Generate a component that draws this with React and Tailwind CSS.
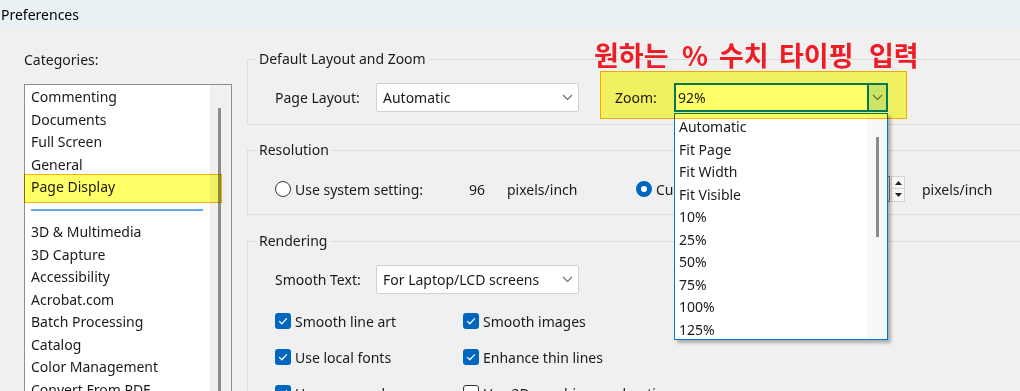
import React from "react";

const Chevron = () => (
  <svg width="11" height="7" viewBox="0 0 11 7">
    <path d="M1 1l4.5 4.5L10 1" fill="none" stroke="#6b6b6b" strokeWidth="1.1" />
  </svg>
);

const Check = ({ on }) =>
  on ? (
    <span className="w-[16px] h-[16px] rounded-[3px] bg-[#0067c0] flex items-center justify-center shrink-0">
      <svg width="10" height="8" viewBox="0 0 10 8">
        <path d="M1.2 4.1l2.6 2.6L8.8 1.4" fill="none" stroke="#ffffff" strokeWidth="1.3" />
      </svg>
    </span>
  ) : (
    <span className="w-[16px] h-[16px] rounded-[3px] border border-[#333333] bg-white shrink-0" />
  );

function Select({ text }) {
  return (
    <div className="w-[203px] h-[29px] bg-white border border-[#d0d0d0] rounded-[2px] flex items-center justify-between pl-[6px] pr-[5px]">
      <span className="whitespace-nowrap">{text}</span>
      <Chevron />
    </div>
  );
}

const cats1 = ["Commenting", "Documents", "Full Screen", "General"];
const cats2 = [
  "3D & Multimedia",
  "3D Capture",
  "Accessibility",
  "Acrobat.com",
  "Batch Processing",
  "Catalog",
  "Color Management",
  "Convert From PDF",
  "Convert To PDF",
];
const zoomItems = [
  "Automatic",
  "Fit Page",
  "Fit Width",
  "Fit Visible",
  "10%",
  "25%",
  "50%",
  "75%",
  "100%",
  "125%",
];

function Group({ title, className, children }) {
  return (
    <fieldset className={"border border-[#dcdcdc] " + className}>
      <legend className="ml-[8px] px-[3px] leading-[20px]">{title}</legend>
      {children}
    </fieldset>
  );
}

export default function App() {
  return (
    <div className="w-[1020px] h-[391px] overflow-hidden bg-[#f0f0f0] text-[14px] text-[#1a1a1a] font-['Noto_Sans',sans-serif]">
      <div className="h-[28px] bg-[#e9f1f5] pl-[1px] flex items-center text-[14px] text-black">
        Preferences
      </div>
      <div className="flex h-[363px] overflow-hidden">
        {/* Left column */}
        <div className="ml-[24px] w-[208px] shrink-0 flex flex-col">
          <div className="pt-[22px] leading-[20px]">Categories:</div>
          <div className="mt-[14px] h-[400px] border border-[#8a8d93] flex shrink-0">
            <div className="w-[185px] bg-white pt-[1px]">
              {cats1.map((c) => (
                <div key={c} className="leading-[22.5px] pl-[6px] whitespace-nowrap">
                  {c}
                </div>
              ))}
              <div className="relative leading-[22.5px] pl-[6px] whitespace-nowrap">
                Page Display
                <span className="absolute left-[-1px] right-[-12px] top-[-2px] bottom-[-4px] bg-[#ffff00]/60 border-[1.5px] border-[#ffb400] mix-blend-multiply z-10" />
              </div>
              <div className="h-[22.5px] flex items-center pl-[6px]">
                <div className="w-[172px] h-[2px] bg-[#64a8e8]" />
              </div>
              {cats2.map((c) => (
                <div key={c} className="leading-[22.5px] pl-[6px] whitespace-nowrap">
                  {c}
                </div>
              ))}
            </div>
            <div className="w-[21px] bg-[#f0f0f0]">
              <div className="ml-[8px] mt-[23px] w-[3px] h-[400px] bg-[#8c8c8c]" />
            </div>
          </div>
        </div>

        {/* Right column */}
        <div className="ml-[15px] w-[800px] shrink-0 flex flex-col">
          <Group title="Default Layout and Zoom" className="mt-[21px]">
            <div className="flex items-center pl-[27px] pt-[14px] pb-[12px]">
              <span className="w-[101px]">Page Layout:</span>
              <Select text="Automatic" />
              <div className="relative ml-[36px] flex items-center">
                <span className="w-[59px]">Zoom:</span>
                <div className="relative w-[214px] h-[29px]">
                  <div className="w-[214px] h-[29px] border-2 border-[#0078d7] bg-white flex">
                    <span className="flex-1 pl-[2px] leading-[25px]">92%</span>
                    <span className="w-[19px] border-l-2 border-[#0078d7] bg-[#cce4f7] flex items-center justify-center">
                      <Chevron />
                    </span>
                  </div>
                  <div className="absolute left-0 top-[30px] w-[214px] h-[227px] border border-[#0078d7] bg-white flex z-10 shadow-[3px_3px_3px_rgba(0,0,0,0.28)]">
                    <div className="flex-1 pl-[4px] pt-[2px]">
                      {zoomItems.map((z) => (
                        <div key={z} className="leading-[22.5px] whitespace-nowrap">
                          {z}
                        </div>
                      ))}
                    </div>
                    <div className="w-[20px] bg-[#f8f8f8]">
                      <div className="ml-[9px] mt-[23px] w-[3px] h-[100px] bg-[#8c8c8c]" />
                    </div>
                  </div>
                </div>
                <span className="absolute left-[-15px] top-[-12px] w-[307px] h-[48px] bg-[#ffff00]/60 border-[1.5px] border-[#ffb400] mix-blend-multiply z-20" />
                <div className="absolute left-[-21px] top-[-46px] flex whitespace-nowrap leading-[36px] text-[27px] font-bold text-[#ee1c25] font-['Noto_Sans_CJK_KR',sans-serif] z-30">
                  <span className="w-[88px]">원하는</span>
                  <span className="w-[37px]">%</span>
                  <span className="w-[60px]">수치</span>
                  <span className="w-[90px]">타이핑</span>
                  <span>입력</span>
                </div>
              </div>
            </div>
          </Group>

          <Group title="Resolution" className="mt-[15px]">
            <div className="flex items-center h-[26px] box-content pl-[27px] pt-[16px] pb-[12px]">
              <div className="w-[194px] flex items-center gap-[4px]">
                <span className="w-[16px] h-[16px] rounded-full border border-[#333333] bg-white shrink-0" />
                <span className="whitespace-nowrap">Use system setting:</span>
              </div>
              <span className="w-[38px]">96</span>
              <span className="w-[129px]">pixels/inch</span>
              <div className="w-[170px] flex items-center gap-[4px]">
                <span className="w-[16px] h-[16px] rounded-full border-[5px] border-[#0067c0] bg-white shrink-0" />
                <span className="whitespace-nowrap">Custom:</span>
              </div>
              <div className="w-[84px] h-[26px] bg-white border border-[#7a7a7a]" />
              <div className="ml-[1px] w-[14px] h-[26px] flex flex-col">
                <div className="h-[13px] border border-[#d4d4d4] bg-[#f7f7f7] flex items-center justify-center">
                  <svg width="7" height="4" viewBox="0 0 7 4"><path d="M0 4L3.5 0L7 4Z" fill="#222" /></svg>
                </div>
                <div className="h-[13px] border border-t-0 border-[#d4d4d4] bg-[#f7f7f7] flex items-center justify-center">
                  <svg width="7" height="4" viewBox="0 0 7 4"><path d="M0 0L3.5 4L7 0Z" fill="#222" /></svg>
                </div>
              </div>
              <span className="ml-[17px] whitespace-nowrap">pixels/inch</span>
            </div>
          </Group>

          <Group title="Rendering" className="mt-[16px]">
            <div className="pl-[27px] pt-[14px] pb-[20px]">
              <div className="flex items-center">
                <span className="w-[101px]">Smooth Text:</span>
                <Select text="For Laptop/LCD screens" />
              </div>
              <div className="mt-[17px] flex flex-col gap-[16px]">
                {[
                  ["Smooth line art", true, "Smooth images", true],
                  ["Use local fonts", true, "Enhance thin lines", true],
                  ["Use page cache", true, "Use 2D graphics acceleration", false],
                ].map(([a, av, b, bv]) => (
                  <div key={a} className="h-[20px] flex items-center">
                    <div className="w-[188px] flex items-center gap-[4px]">
                      <Check on={av} />
                      <span className="whitespace-nowrap">{a}</span>
                    </div>
                    <div className="flex items-center gap-[4px]">
                      <Check on={bv} />
                      <span className="whitespace-nowrap">{b}</span>
                    </div>
                  </div>
                ))}
              </div>
            </div>
          </Group>
        </div>
      </div>
    </div>
  );
}
